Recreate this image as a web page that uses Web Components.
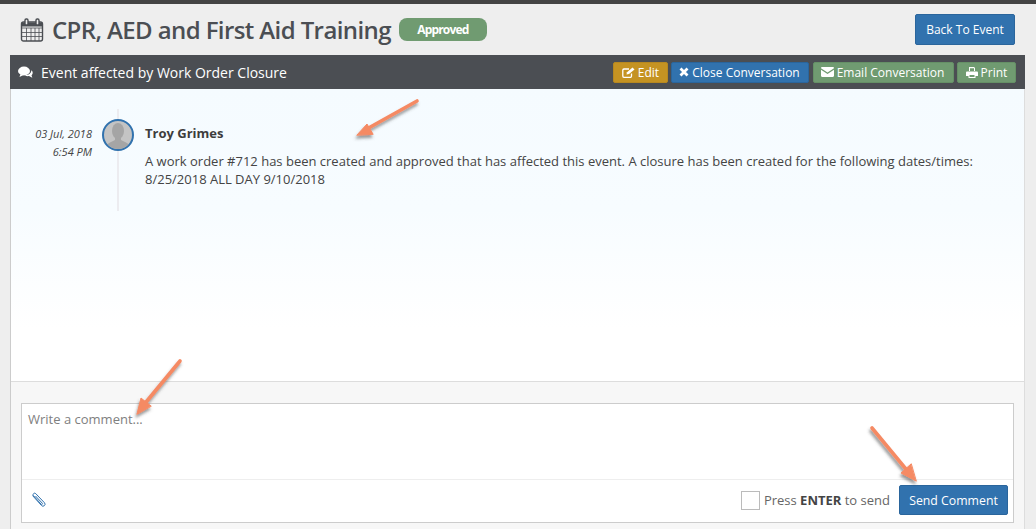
<!DOCTYPE html>
<html><head><meta charset="utf-8">
<style>
html,body{margin:0;padding:0}
body{width:1036px;height:529px;overflow:hidden;background:#eeeeee;font-family:"Open Sans",sans-serif;position:relative}
</style></head><body>
<event-page></event-page>
<template id="btn-t"><style>
:host{display:inline-flex;align-items:center;justify-content:center;box-sizing:border-box;height:21px;width:var(--w);gap:3px;border-radius:2px;color:#fff;font-size:12px;background:var(--c);border:1px solid var(--b);white-space:nowrap}
svg{display:block}
</style><slot></slot></template>
<template id="page-t"><style>
:host{display:block;width:1036px;height:529px;position:relative;color:#444;border-top:4px solid #444;box-sizing:border-box}
header{height:51px;display:flex;align-items:center;padding:0 21px 0 20px;box-sizing:border-box}
header h1{margin:0 0 0 8px;font-size:24px;font-weight:600;color:#4b4e53;letter-spacing:-.6px;line-height:1;white-space:nowrap}
.badge{margin-left:8px;width:88px;height:23px;border-radius:8px;background:#709b71;color:#fff;font-size:12px;font-weight:700;letter-spacing:-.8px;display:flex;align-items:center;justify-content:center}
.back{margin-left:auto;width:100px;height:31px;background:#3172ae;border:1px solid #2a659c;border-radius:2px;color:#fff;font-size:12px;display:flex;align-items:center;justify-content:center;box-sizing:border-box}
.panel{margin:0 11px 0 10px;height:474px;display:flex;flex-direction:column;border-right:1px solid #ddd;border-left:1px solid #ccc;box-sizing:border-box}
.bar{height:34px;margin:0 -1px;background:#4b4e53;display:flex;align-items:center;padding:0 9px 0 8px;color:#fff;flex:none}
.bar .title{margin-left:8px;font-size:14px}
.bar .acts{margin-left:auto;display:flex;gap:3px}
.msgs{height:293px;flex:none;background:linear-gradient(#f5fbff 0,#f7fcff 120px,#fff 240px);border-bottom:1px solid #ddd;box-sizing:border-box;padding:20px 0 0 0;display:flex}
.time{width:81px;text-align:right;font-size:11px;font-style:italic;line-height:18px;padding-top:16px;color:#444;flex:none}
.line{width:2px;height:102px;background:#ececf0;margin-left:25px;position:relative;flex:none}
.avatar{position:absolute;left:-15px;top:10px;width:32px;height:32px;box-sizing:border-box;border:2px solid #3172ae;border-radius:50%;background:#c4c4c4;overflow:hidden}
.content{margin-left:26px;padding-top:15px;font-size:13px;line-height:18px;color:#444}
.name{font-weight:700;font-size:13px;margin-bottom:10px;color:#3d3d3d}
.foot{flex:1;background:#f7f7f7;padding:21px 10px 0 10px}
.box{height:120px;background:#fff;border:1px solid #ccc;box-sizing:border-box;display:flex;flex-direction:column}
.ph{height:76px;border-bottom:1px solid #eee;flex:none;box-sizing:border-box;padding:7px 6px;font-size:13px;line-height:16px;color:#808080}
.tools{flex:1;display:flex;align-items:center;padding:0 5px 2px 8px}
.check{margin-left:auto;width:19px;height:19px;border:1px solid #bbb;box-sizing:border-box;background:#fff}
.lbl{margin:0 9px 0 4px;font-size:13px;color:#666}
.lbl b{color:#444}
.send{width:109px;height:30px;background:#3172ae;border:1px solid #2a659c;border-radius:2px;box-sizing:border-box;color:#fff;font-size:12.3px;display:flex;align-items:center;justify-content:center}
.arrows{position:absolute;left:0;top:-4px;width:1036px;height:529px;pointer-events:none}
</style>
<header>
<svg width="24" height="24" viewBox="0 0 24 24" fill="none" stroke="#4b4e53" stroke-width="1.4"><rect x="1.5" y="4" width="21" height="19" rx="2"/><path d="M1.500 10h21M1.500 14.500h21M1.500 18.500h21M6.500 10V23M11 10V23M15 10V23M19 10V23" stroke-width=".8"/><path d="M2 6.500h20" stroke-width="4"/><rect x="5" y="1" width="3" height="6" rx="1.200" fill="#eee"/><rect x="16" y="1" width="3" height="6" rx="1.200" fill="#eee"/></svg>
<h1>CPR, AED and First Aid Training</h1>
<div class="badge">Approved</div>
<div class="back">Back To Event</div>
</header>
<div class="panel">
<div class="bar">
<svg width="15" height="13" viewBox="0 0 15 13" fill="#fff"><ellipse cx="6" cy="5" rx="6" ry="4.400"/><path d="M2.500 8 1.500 11 5.500 9z"/><path d="M13.300 4.200c1.600 1 2 3.600.2 5l.8 2.600-3.300-1.700c-1.500.3-3 0-4.200-.9 3.500.1 6.800-1.800 6.500-5z"/></svg>
<span class="title">Event affected by Work Order Closure</span>
<div class="acts">
<ui-btn style="--w:55px;--c:#c59322;--b:#b78820"><svg width="13" height="11" viewBox="0 0 13 11" fill="none" stroke="#fff" stroke-width="1.300"><path d="M9.500 6.500V9a1.300 1.300 0 0 1-1.300 1.300H2A1.300 1.300 0 0 1 .8 9V3.300A1.300 1.300 0 0 1 2 2h5"/><path d="M4.500 7.500 5 5.300 10.500.5l2 2L7 7z" fill="#fff" stroke="none"/></svg>Edit</ui-btn>
<ui-btn style="--w:138px;--c:#3172ae;--b:#2a659c;padding-right:1px"><svg width="10" height="10" viewBox="0 0 10 10" stroke="#fff" stroke-width="2.800"><path d="M1.500 1.500l7 7M8.500 1.500l-7 7"/></svg>Close Conversation</ui-btn>
<ui-btn style="--w:141px;--c:#709b71;--b:#659066;margin-left:1px;padding-right:2px"><svg width="13" height="10" viewBox="0 0 13 10" fill="#fff"><path d="M0 1.200C0 .5.500 0 1.200 0h10.600c.7 0 1.200.5 1.200 1.200L6.500 5.500zM0 2.800l6.500 4.300L13 2.800v6C13 9.500 12.500 10 11.800 10H1.200C.5 10 0 9.500 0 8.800z"/></svg>Email Conversation</ui-btn>
<ui-btn style="--w:59px;--c:#709b71;--b:#659066"><svg width="12" height="11" viewBox="0 0 12 11" fill="#fff"><path d="M3 0h5l1 1v3H8V1.200H4V4H3zM1.200 4.500h9.600c.7 0 1.200.5 1.200 1.200V9H9.500v2h-7V9H0V5.700c0-.7.5-1.200 1.200-1.200zM3.500 8v2h5V8z"/></svg>Print</ui-btn>
</div>
</div>
<div class="msgs">
<div class="time">03 Jul, 2018<br>6:54 PM</div>
<div class="line"><div class="avatar"><svg width="28" height="28" viewBox="0 0 28 28" fill="#a5a5a5"><ellipse cx="14" cy="10" rx="6" ry="8"/><path d="M11 16h6v3l6 3c2 1 2 3 2 6H3c0-3 0-5 2-6l6-3z"/></svg></div></div>
<div class="content"><div class="name">Troy Grimes</div>A work order #712 has been created and approved that has affected this event. A closure has been created for the following dates/times:<br>8/25/2018 ALL DAY 9/10/2018</div>
</div>
<div class="foot"><div class="box">
<div class="ph">Write a comment...</div>
<div class="tools">
<svg width="16" height="16" viewBox="0 0 16 16" fill="none" stroke="#3172ae" stroke-width="1"><path d="M2.500 3.500 11.500 13.500a2 2 0 0 0 3-2.700L5.800 1.700a1.500 1.500 0 0 0-2.300 2l7.700 8.600a.8.8 0 0 0 1.200-1L5.500 4"/></svg>
<div class="check"></div><div class="lbl">Press <b>ENTER</b> to send</div>
<div class="send">Send Comment</div>
</div>
</div></div>
</div>
<svg class="arrows" viewBox="0 0 1036 529">
<defs><filter id="s" x="-30%" y="-30%" width="160%" height="160%"><feDropShadow dx="-1" dy="3" stdDeviation="1.500" flood-color="#444" flood-opacity=".55"/></filter></defs>
<g filter="url(#s)" fill="#f58a64" stroke="#f58a64" stroke-linecap="round">
<path d="M417 101 365 130" stroke-width="3.600" fill="none"/><path d="M357 135 367 124 373 134z" stroke-width="1"/>
<path d="M180 361 142 407" stroke-width="3.600" fill="none"/><path d="M137 414 141 398 151 406z" stroke-width="1"/>
<path d="M872 428 910 474" stroke-width="3.600" fill="none"/><path d="M916 481 901 473 911 464z" stroke-width="1"/>
</g></svg>
</template>
<script>
class UiBtn extends HTMLElement{constructor(){super();this.attachShadow({mode:"open"}).appendChild(document.getElementById("btn-t").content.cloneNode(true))}}
class EventPage extends HTMLElement{constructor(){super();this.attachShadow({mode:"open"}).appendChild(document.getElementById("page-t").content.cloneNode(true))}}
customElements.define("ui-btn",UiBtn);customElements.define("event-page",EventPage);
</script>
</body></html>
